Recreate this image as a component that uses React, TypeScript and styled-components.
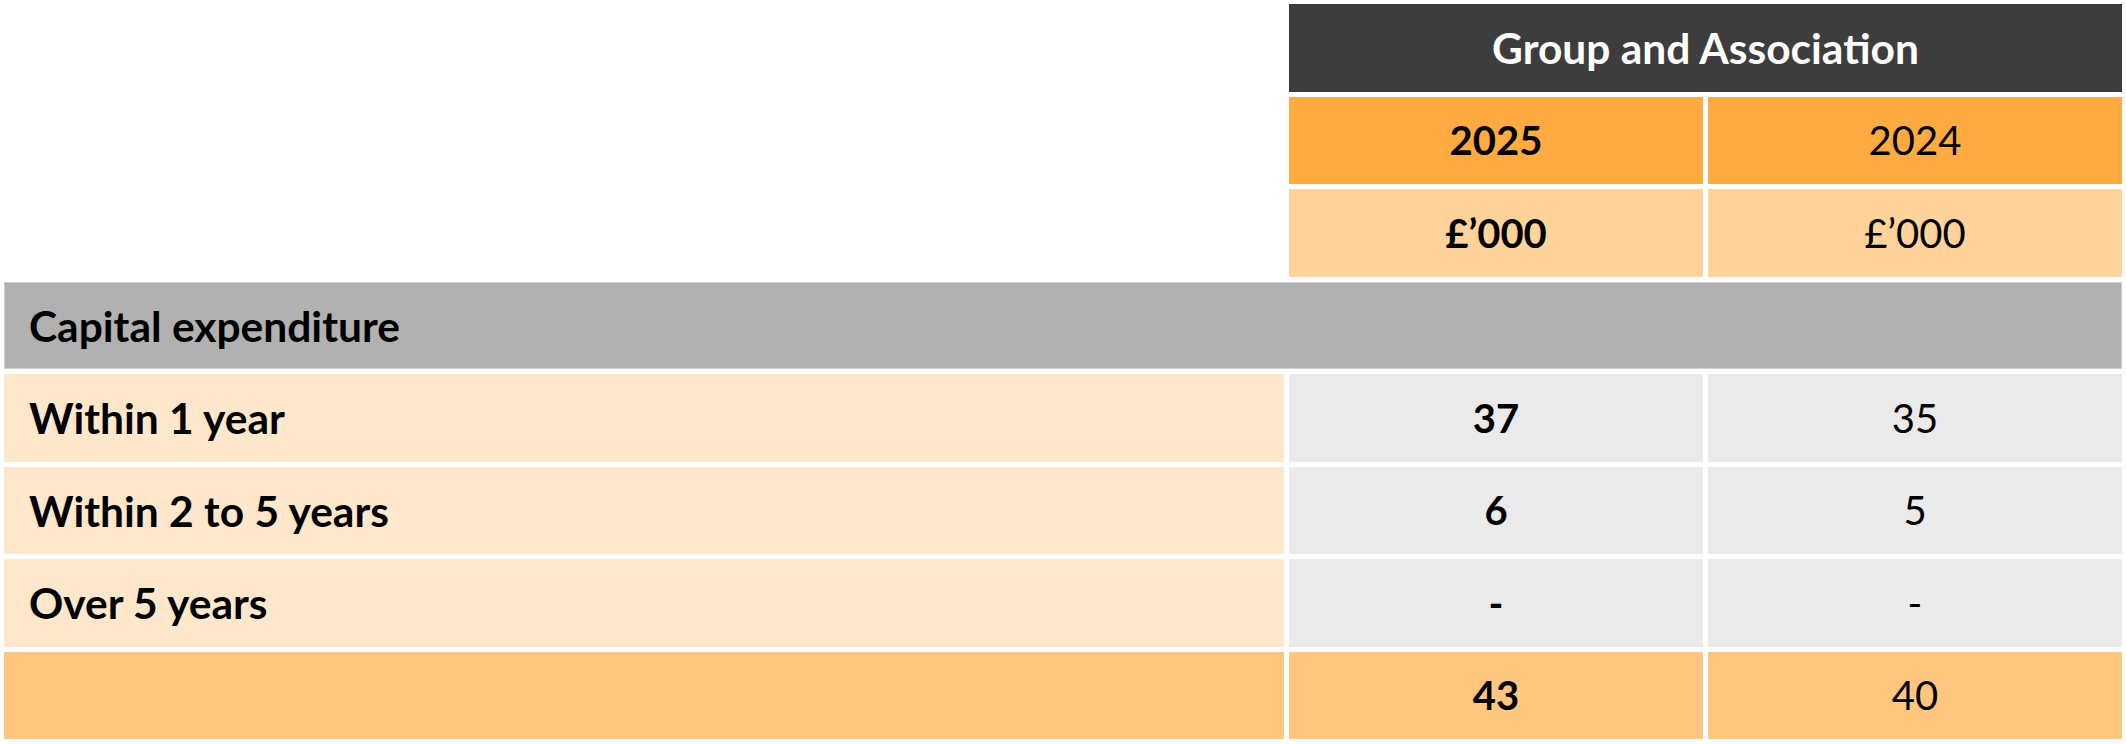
import * as React from 'react'
import styled, { createGlobalStyle } from 'styled-components'

// Colours picked from the reference
const tones = {
  dark: '#3d3d3d',
  year: '#ffab42',
  unit: '#ffd399',
  section: '#b1b1b1',
  label: '#ffe7cc',
  value: '#eaeaea',
  total: '#ffc680',
  blank: '#ffffff',
}

type Tone = keyof typeof tones

const GlobalStyle = createGlobalStyle`
  html, body {
    margin: 0;
    padding: 0;
    background: #ffffff;
  }
  body {
    font-family: Lato, "Open Sans", "Liberation Sans", sans-serif;
    color: #000000;
  }
`

const Table = styled.div`
  display: grid;
  grid-template-columns: 1280px 414px 414px;
  grid-auto-rows: 87.5px;
  gap: 5px;
  padding: 4px;
  width: max-content;
`

type CellProps = {
  $tone: Tone
  $bold?: boolean
  $align?: 'left' | 'center'
  $span?: number
}

const Cell = styled.div<CellProps>`
  display: flex;
  align-items: center;
  justify-content: ${(p) => (p.$align === 'left' ? 'flex-start' : 'center')};
  padding: ${(p) => (p.$align === 'left' ? '0 0 0 25px' : '0')};
  background-color: ${(p) => tones[p.$tone]};
  grid-column: ${(p) => (p.$span ? `span ${p.$span}` : 'auto')};
  font-size: ${(p) => (p.$align === 'left' ? '42.5px' : '40px')};
  font-weight: ${(p) => (p.$bold ? 700 : 400)};
  white-space: nowrap;
`

const TitleCell = styled(Cell)`
  color: #ffffff;
  font-size: 42.5px;
`

const SectionCell = styled(Cell)`
  box-shadow: inset 0 0 0 1px #cfcfcf;
`

type Row = {
  label: string
  current: string
  previous: string
}

const rows: Row[] = [
  { label: 'Within 1 year', current: '37', previous: '35' },
  { label: 'Within 2 to 5 years', current: '6', previous: '5' },
  { label: 'Over 5 years', current: '-', previous: '-' },
]

export default function App() {
  return (
    <>
      <GlobalStyle />
      <Table>
        {/* column headings */}
        <Cell $tone="blank" />
        <TitleCell $tone="dark" $bold $span={2}>
          Group and Association
        </TitleCell>

        <Cell $tone="blank" />
        <Cell $tone="year" $bold>2025</Cell>
        <Cell $tone="year">2024</Cell>

        <Cell $tone="blank" />
        <Cell $tone="unit" $bold>£’000</Cell>
        <Cell $tone="unit">£’000</Cell>

        <SectionCell $tone="section" $bold $align="left" $span={3}>
          Capital expenditure
        </SectionCell>

        {rows.map((r) => (
          <React.Fragment key={r.label}>
            <Cell $tone="label" $bold $align="left">{r.label}</Cell>
            <Cell $tone="value" $bold>{r.current}</Cell>
            <Cell $tone="value">{r.previous}</Cell>
          </React.Fragment>
        ))}

        <Cell $tone="total" />
        <Cell $tone="total" $bold>43</Cell>
        <Cell $tone="total">40</Cell>
      </Table>
    </>
  )
}
